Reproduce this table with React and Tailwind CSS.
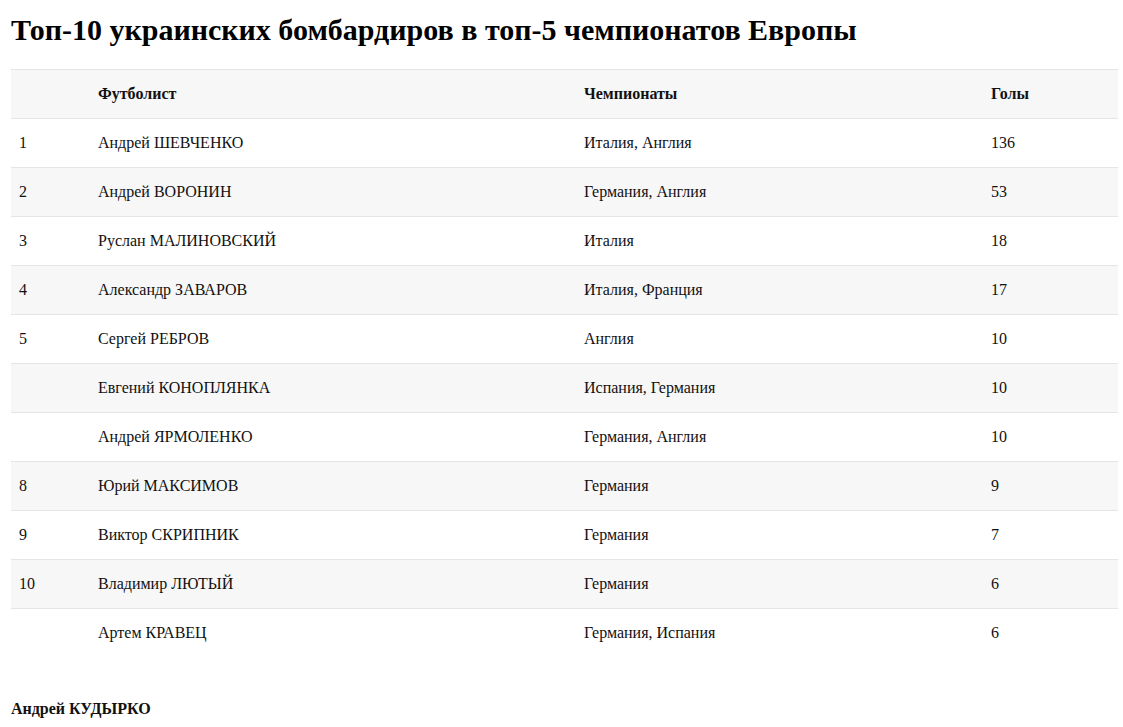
import React from "react";

const rows = [
  ["1", "Андрей ШЕВЧЕНКО", "Италия, Англия", "136"],
  ["2", "Андрей ВОРОНИН", "Германия, Англия", "53"],
  ["3", "Руслан МАЛИНОВСКИЙ", "Италия", "18"],
  ["4", "Александр ЗАВАРОВ", "Италия, Франция", "17"],
  ["5", "Сергей РЕБРОВ", "Англия", "10"],
  ["", "Евгений КОНОПЛЯНКА", "Испания, Германия", "10"],
  ["", "Андрей ЯРМОЛЕНКО", "Германия, Англия", "10"],
  ["8", "Юрий МАКСИМОВ", "Германия", "9"],
  ["9", "Виктор СКРИПНИК", "Германия", "7"],
  ["10", "Владимир ЛЮТЫЙ", "Германия", "6"],
  ["", "Артем КРАВЕЦ", "Германия, Испания", "6"],
];

export default function App() {
  return (
    <div
      className="bg-white text-[#111] min-h-[727px] pl-[11px] pr-[5px]"
      style={{ fontFamily: '"Liberation Serif", "Times New Roman", serif' }}
    >
      <h1 className="text-[30px] leading-[34px] font-bold pt-[13px] m-0 text-black">
        Топ-10 украинских бомбардиров в топ-5 чемпионатов Европы
      </h1>
      <table className="mt-[22px] w-[1107px] table-fixed border-collapse text-[16px]">
        <colgroup>
          <col className="w-[79px]" />
          <col className="w-[486px]" />
          <col className="w-[407px]" />
          <col />
        </colgroup>
        <thead>
          <tr className="bg-[#f7f7f7] border-t border-b border-[#e5e5e5] h-[49px]">
            <th className="text-left px-2 font-bold"></th>
            <th className="text-left px-2 font-bold">Футболист</th>
            <th className="text-left px-2 font-bold">Чемпионаты</th>
            <th className="text-left px-2 font-bold">Голы</th>
          </tr>
        </thead>
        <tbody>
          {rows.map((r, i) => (
            <tr
              key={i}
              className={`h-[49px] ${i % 2 === 1 ? "bg-[#f7f7f7]" : "bg-white"} ${
                i < rows.length - 1 ? "border-b border-[#e5e5e5]" : ""
              }`}
            >
              {r.map((c, j) => (
                <td key={j} className="px-2 align-middle">
                  {c}
                </td>
              ))}
            </tr>
          ))}
        </tbody>
      </table>
      <p className="mt-[39px] text-[16px] font-bold">Андрей КУДЫРКО</p>
    </div>
  );
}
